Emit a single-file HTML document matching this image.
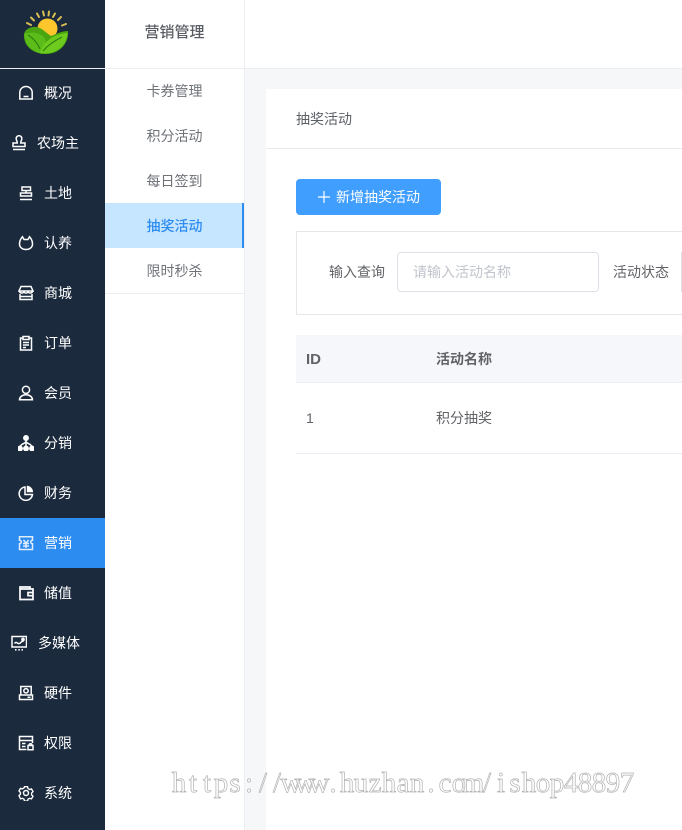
<!DOCTYPE html>
<html lang="zh"><head><meta charset="utf-8"><title>抽奖活动</title>
<style>
*{box-sizing:border-box;margin:0;padding:0}
html,body{width:682px;height:830px;overflow:hidden;background:#fff}
body{position:relative;font-family:"Liberation Sans","Noto Sans CJK SC",sans-serif;font-size:14px;color:#606266}
.a{position:absolute}
#side{left:0;top:0;width:105px;height:830px;background:#1b2a3d}
#logo-line{left:0;top:68px;width:105px;height:1px;background:#e8eef2}
.n{position:absolute;left:0;width:105px;height:50px;color:#fff;font-size:14px;line-height:50px;white-space:nowrap}
.n.on{background:#2d8cf0}
.n span{position:absolute;top:0}
.n svg{position:absolute;width:16px;height:16px;top:17px;left:18px;fill:none;stroke:#fff;stroke-width:1.500}
.s{position:absolute;left:105px;width:139px;height:45px;line-height:45px;text-align:center;font-size:14px;color:#6e7277}
.s.on{background:#c6e6ff;color:#2d8cf0;border-right:2px solid #2d8cf0;padding-left:2px;line-height:47px}
.t{white-space:nowrap;line-height:20px}
</style></head><body>
<div class="a" style="left:245px;top:69px;width:437px;height:761px;background:#f5f7f9"></div>
<div class="a" style="left:245px;top:0;width:437px;height:69px;background:#fff;border-bottom:1px solid #eceef1"></div>
<div class="a" style="left:244px;top:0;width:1px;height:830px;background:#eceef1"></div>

<div class="a" id="side"></div>
<svg class="a" style="left:22px;top:10px" width="48" height="46" viewBox="0 0 48 46">
<g stroke="#d9bd55" stroke-width="2" stroke-linecap="round"><path d="M5 13l4 2M9 7.500l3 3M15 3.500l2 3.500M21 1.500l1 4M27 1.500l-.5 4M33 3.500l-2 3.500M39 7l-3 3M44 14l-4 1.500"/></g>
<circle cx="25.500" cy="18.500" r="10" fill="#fcc62c"/>
<path d="M2 24C3 19 9 16.500 14 17c6 .5 10 6 15 9 5-2 11-5 17-5 1 13-9 23-22 23S1 36 2 24z" fill="#4aa510"/>
<path d="M2.500 24c8-3 17-1 20.500 5 2 4 0 10-3 15C9 41 2.500 34 2.500 24z" fill="#5cbd1a"/>
<path d="M18 43c3-11 13-19 27.500-20C45 35 34 46 18 43z" fill="#6ccb1c"/>
<path d="M21 41c5-6 11-10 19-14M6 25c5 3 9 7 12 14" stroke="#2f7f10" stroke-width="1.200" fill="none"/>
</svg>
<div class="a" id="logo-line"></div>

<div class="n" style="top:68px"><svg viewBox="0 0 16 16"><path d="M1.800 14V7.500a6.200 6 0 0 1 12.400 0V14zM5.500 11.500h5"/></svg><span style="left:44px">概况</span></div>
<div class="n" style="top:118px"><svg style="left:11px" viewBox="0 0 16 16"><path d="M5.300 4.200a2.800 2.800 0 1 1 5.400 0c0 1.400-1 1.800-1 3.800h4.300v3.500H2V8h4.300c0-2-1-2.400-1-3.800zM2 14.500h12"/></svg><span style="left:37px">农场主</span></div>
<div class="n" style="top:168px"><svg viewBox="0 0 16 16"><path d="M4 2h8.500v3.500H4zM2.500 8h11v3h-11zM2 14.500h12M8 5.500V8"/></svg><span style="left:44px">土地</span></div>
<div class="n" style="top:218px"><svg viewBox="0 0 16 16"><path d="M4.500 1.800C2.500 4 1.500 6.500 1.500 9c0 3.500 3 5.500 6.500 5.500s6.500-2 6.500-5.500c0-2.500-1-5-3-7.200L10 4.500H6z"/></svg><span style="left:44px">认养</span></div>
<div class="n" style="top:268px"><svg viewBox="0 0 16 16"><path d="M3 1.500h10L15 6H1zM1.500 6c0 2.500 3.500 2.500 4.500 1 1 1.500 3 1.500 4 0 1 1.500 4.500 1.500 4.500-1M2 9v5.500h12V9M2 11.500h12"/></svg><span style="left:44px">商城</span></div>
<div class="n" style="top:318px"><svg viewBox="0 0 16 16"><path d="M5 3H2.500v12h11V3H11M5 1.500h6v3H5zM5 7.500h6M5 10h6M5 12.500h3"/></svg><span style="left:44px">订单</span></div>
<div class="n" style="top:368px"><svg viewBox="0 0 16 16"><circle cx="8" cy="4.800" r="3.600"/><path d="M1.500 14.800c0-2.800 2.800-5 6.500-5s6.500 2.200 6.500 5z"/></svg><span style="left:44px">会员</span></div>
<div class="n" style="top:418px"><svg viewBox="0 0 16 16"><circle cx="8" cy="3" r="2.200" fill="#fff"/><circle cx="2" cy="13.500" r="2.200" fill="#fff"/><circle cx="8" cy="13.500" r="2.200" fill="#fff"/><circle cx="14" cy="13.500" r="2.200" fill="#fff"/><path d="M8 4v9M2 13c0-4 4-4 6-6 2 2 6 2 6 6"/></svg><span style="left:44px">分销</span></div>
<div class="n" style="top:468px"><svg viewBox="0 0 16 16"><path d="M7 2a6.700 6.700 0 1 0 7.500 7.500H7z"/><path d="M8.800 .8a6.200 6.200 0 0 1 6.200 6.500H8.800z" fill="#fff" stroke="none"/></svg><span style="left:44px">财务</span></div>
<div class="n on" style="top:518px"><svg viewBox="0 0 16 16" style="opacity:.85"><path d="M1.500 1.800h13v3.400a1.800 1.800 0 0 0 0 3.600v5.700h-13V8.800a1.800 1.800 0 0 0 0-3.600zM5.500 5l2.500 3.200L10.500 5M5 8.500h6M5 11h6M8 8.500V13"/></svg><span style="left:44px">营销</span></div>
<div class="n" style="top:568px"><svg viewBox="0 0 16 16"><path d="M2 4V2h10v2M2 4h13v10.500H2zM15 7.500h-5v3.200h5" stroke-width="1.700"/></svg><span style="left:44px">储值</span></div>
<div class="n" style="top:618px"><svg style="left:11px" viewBox="0 0 16 16"><path d="M1 1.500h14.500v10.500H1zM3.500 8.500c2-3 3 1 5 0s2-3 4.500-2.500"/><circle cx="12" cy="4.500" r="1.100" fill="#fff"/><path d="M4 14.800h1.500M7.300 14.800h1.500M10.500 14.800H12" stroke-width="1.600"/></svg><span style="left:38px">多媒体</span></div>
<div class="n" style="top:668px"><svg viewBox="0 0 16 16"><path d="M2.800 1.500h10.400v8.500H2.800zM1.500 10h13v4.500h-13z"/><circle cx="8" cy="5.800" r="2.200"/><path d="M9.500 12.300h3"/></svg><span style="left:44px">硬件</span></div>
<div class="n" style="top:718px"><svg viewBox="0 0 16 16"><path d="M14.500 8V1.500h-13v13h7M1.500 5.500h13M4 8.500h3.500M4 11.500h3.500M10 10.500h5v4.300h-5zM11 10.500c0-2.300 3-2.300 3 0"/></svg><span style="left:44px">权限</span></div>
<div class="n" style="top:768px"><svg viewBox="0 0 16 16"><path d="M6.300 1h3.400l.5 2.100 1.800 1 2.100-.6 1.700 2.900-1.600 1.600v2l1.600 1.600-1.700 2.900-2.100-.6-1.800 1-.5 2.100H6.300l-.5-2.100-1.800-1-2.100.6L.2 10.900l1.600-1.600v-2L.2 5.700l1.700-2.900 2.100.6 1.800-1z" transform="translate(.8 .8) scale(.9)"/><circle cx="8" cy="8" r="2.500"/></svg><span style="left:44px">系统</span></div>

<div class="a" style="left:105px;top:68px;width:139px;height:1px;background:#eceef1"></div>
<div class="a t" style="left:105px;top:23px;width:139px;text-align:center;font-size:15px;font-weight:500;color:#5a5e64">营销管理</div>
<div class="s" style="top:69px">卡券管理</div>
<div class="s" style="top:114px">积分活动</div>
<div class="s" style="top:159px">每日签到</div>
<div class="s on" style="top:203px;font-weight:500">抽奖活动</div>
<div class="s" style="top:249px;height:44px">限时秒杀</div>
<div class="a" style="left:105px;top:293px;width:139px;height:1px;background:#eceef1"></div>

<div class="a" style="left:266px;top:89px;width:416px;height:741px;background:#fff"></div>
<div class="a" style="left:266px;top:148px;width:416px;height:1px;background:#e8eaec"></div>
<div class="a t" style="left:296px;top:109px;font-size:14px;color:#5c6066">抽奖活动</div>

<div class="a" style="left:296px;top:179px;width:145px;height:36px;background:#409eff;border-radius:4px"></div>
<svg class="a" style="left:318px;top:191px" width="12" height="12" viewBox="0 0 12 12"><path d="M6 0v12M0 6h12" stroke="#fff" stroke-width="1.200"/></svg>
<div class="a t" style="left:336px;top:187px;color:#fff">新增抽奖活动</div>

<div class="a" style="left:296px;top:231px;width:386px;height:84px;border:1px solid #e4e6e9;border-right:0"></div>
<div class="a t" style="left:329px;top:262px">输入查询</div>
<div class="a" style="left:397px;top:252px;width:202px;height:40px;border:1px solid #dcdfe6;border-radius:4px"></div>
<div class="a t" style="left:413px;top:262px;color:#c0c4cc">请输入活动名称</div>
<div class="a t" style="left:613px;top:262px">活动状态</div>
<div class="a" style="left:681px;top:252px;width:1px;height:40px;background:#dcdfe6"></div>

<div class="a" style="left:296px;top:335px;width:386px;height:48px;background:#f5f7fa;border-bottom:1px solid #ebeef5"></div>
<div class="a t" style="left:306px;top:350px;font-size:15px;font-weight:700">ID</div>
<div class="a t" style="left:436px;top:349px;font-weight:700">活动名称</div>
<div class="a t" style="left:306px;top:408px;font-size:14px">1</div>
<div class="a t" style="left:436px;top:408px">积分抽奖</div>
<div class="a" style="left:296px;top:453px;width:386px;height:1px;background:#ebeef5"></div>

<svg class="a" style="left:0;top:750px" width="682" height="60" viewBox="0 0 682 60">
<text y="42" font-family="Liberation Serif, serif" font-size="29" text-anchor="middle" fill="rgba(255,255,255,.55)" stroke="#b2b2b2" stroke-width=".7" x="179 193 207 221 235 249 263 277 291 305 319 333 347 361 375 389 403 417 431 445 459 473 487 501 515 529 543 557 571 585 599 613 627">https://www.huzhan.com/ishop48897</text>
</svg>
</body></html>
